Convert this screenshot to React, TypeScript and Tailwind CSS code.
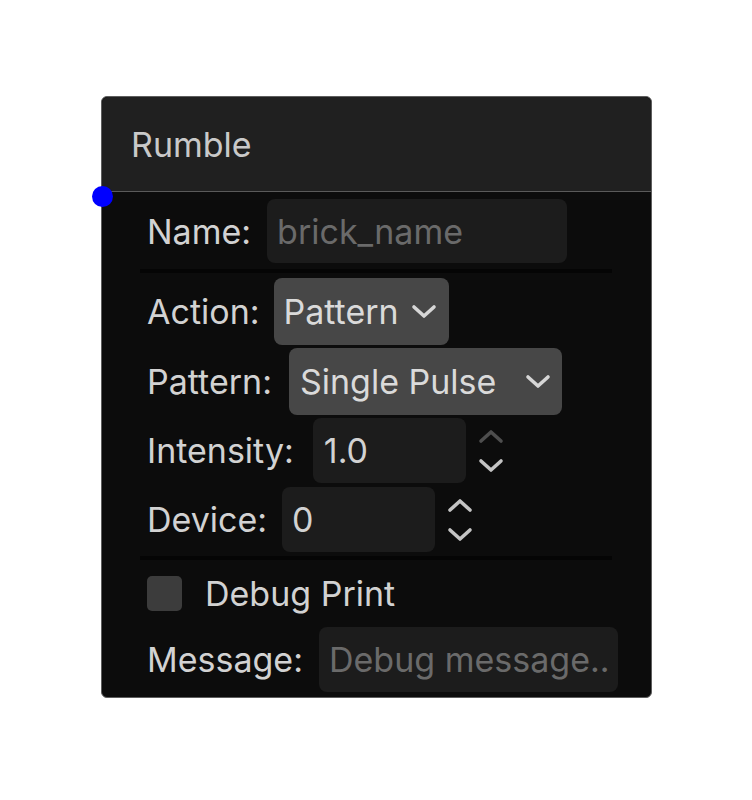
import React from "react";

const FONT = { fontFamily: "Inter, 'Noto Sans', sans-serif" };

function Chevron({ up = false, className = "" }: { up?: boolean; className?: string }) {
  return (
    <svg width="26" height="16" viewBox="0 0 26 16" className={className} fill="none">
      <polyline
        points={up ? "3,13 13,4 23,13" : "3,3 13,12 23,3"}
        stroke="currentColor"
        strokeWidth="3.6"
        strokeLinecap="round"
        strokeLinejoin="round"
      />
    </svg>
  );
}

function Spinner({ upDim = false }: { upDim?: boolean }) {
  return (
    <div className="flex flex-col items-center gap-[14px] ml-[12px]">
      <Chevron up className={upDim ? "text-[#4e4e4e]" : "text-[#c4c4c4]"} />
      <Chevron className="text-[#c4c4c4]" />
    </div>
  );
}

export default function App() {
  return (
    <div className="min-h-screen bg-white pt-[96px] pl-[101px]" style={FONT}>
      <div className="relative w-[551px] rounded-[6px] border border-[#5e5e5e] bg-[#0c0c0c]">
        {/* output socket */}
        <div className="absolute left-[-10px] top-[89px] h-[21px] w-[21px] rounded-full bg-[#0000ff]" />

        {/* Header */}
        <div className="flex h-[95px] items-center rounded-t-[6px] border-b border-[#5a5a5a] bg-[#202020] pl-[29px]">
          <span className="text-[34px] text-[#c9c9c9]">Rumble</span>
        </div>

        {/* Body */}
        <div className="pl-[38px] pt-[7px] pb-[5px] text-[34px] text-[#d2d2d2]">
          <div className="flex h-[64px] items-center gap-[16px] pl-[7px]">
            <span>Name:</span>
            <div className="flex h-[64px] w-[300px] items-center rounded-[8px] bg-[#1c1c1c] pl-[10px] text-[#6a6a6a]">
              brick_name
            </div>
          </div>

          <div className="mt-[6px] h-[4px] w-[472px] bg-[#050505]" />

          <div className="mt-[5px] flex h-[67px] items-center gap-[14px] pl-[7px]">
            <span>Action:</span>
            <div className="flex h-[67px] w-[175px] items-center justify-between rounded-[8px] bg-[#474747] pl-[10px] pr-[12px] text-[#dadada]">
              <span>Pattern</span>
              <Chevron className="text-[#d6d6d6]" />
            </div>
          </div>

          <div className="mt-[3px] flex h-[67px] items-center gap-[17px] pl-[7px]">
            <span>Pattern:</span>
            <div className="flex h-[67px] w-[273px] items-center justify-between rounded-[8px] bg-[#474747] pl-[11px] pr-[11px] text-[#dadada]">
              <span>Single Pulse</span>
              <Chevron className="text-[#d6d6d6]" />
            </div>
          </div>

          <div className="mt-[3px] flex h-[65px] items-center pl-[7px]">
            <span className="mr-[19px]">Intensity:</span>
            <div className="flex h-[65px] w-[153px] items-center rounded-[8px] bg-[#1c1c1c] pl-[11px]">
              1.0
            </div>
            <Spinner upDim />
          </div>

          <div className="mt-[4px] flex h-[65px] items-center pl-[7px]">
            <span className="mr-[15px]">Device:</span>
            <div className="flex h-[65px] w-[153px] items-center rounded-[8px] bg-[#1c1c1c] pl-[10px]">
              0
            </div>
            <Spinner />
          </div>

          <div className="mt-[4px] h-[4px] w-[472px] bg-[#050505]" />

          <div className="flex h-[67px] items-center gap-[23px] pl-[7px]">
            <div className="h-[35px] w-[35px] rounded-[5px] bg-[#3c3c3c]" />
            <span>Debug Print</span>
          </div>

          <div className="flex h-[65px] items-center gap-[16px] pl-[7px]">
            <span>Message:</span>
            <div className="flex h-[65px] w-[299px] items-center overflow-hidden whitespace-nowrap rounded-[8px] bg-[#1c1c1c] pl-[10px] text-[#6a6a6a]">
              Debug message..
            </div>
          </div>
        </div>
      </div>
    </div>
  );
}
